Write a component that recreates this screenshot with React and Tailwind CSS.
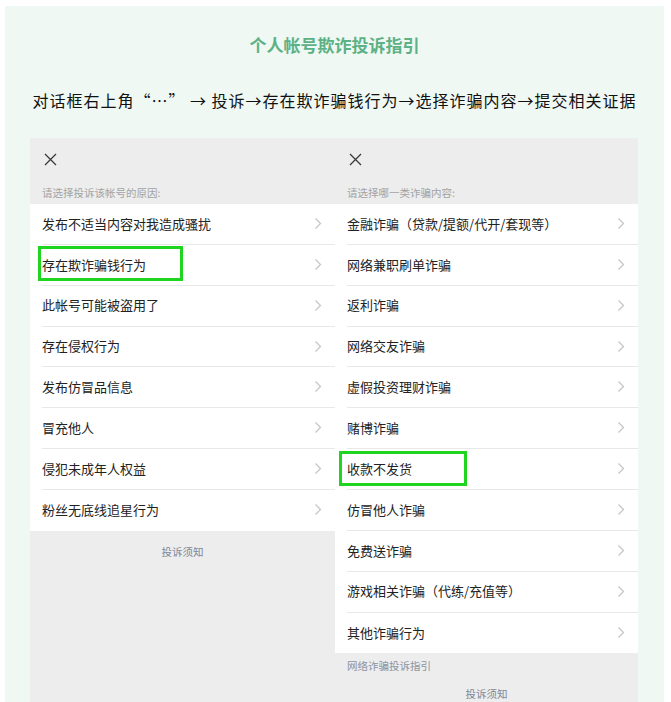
import React from "react";

const leftItems = [
  "发布不适当内容对我造成骚扰",
  "存在欺诈骗钱行为",
  "此帐号可能被盗用了",
  "存在侵权行为",
  "发布仿冒品信息",
  "冒充他人",
  "侵犯未成年人权益",
  "粉丝无底线追星行为",
];

const rightItems = [
  "金融诈骗（贷款/提额/代开/套现等）",
  "网络兼职刷单诈骗",
  "返利诈骗",
  "网络交友诈骗",
  "虚假投资理财诈骗",
  "赌博诈骗",
  "收款不发货",
  "仿冒他人诈骗",
  "免费送诈骗",
  "游戏相关诈骗（代练/充值等）",
  "其他诈骗行为",
];

function Chevron() {
  return (
    <svg width="8" height="13" viewBox="0 0 8 13" className="shrink-0">
      <polyline points="1.5,1.5 6.5,6.5 1.5,11.5" fill="none" stroke="#c4c4c4" strokeWidth="1.2" />
    </svg>
  );
}

function CloseIcon() {
  return (
    <svg width="13" height="13" viewBox="0 0 13 13">
      <path d="M1 1 L12 12 M12 1 L1 12" stroke="#3a3a3a" strokeWidth="1.3" fill="none" />
    </svg>
  );
}

function Row({ text, last }) {
  return (
    <div className="h-[40.86px] pl-[12px] bg-white">
      <div className={`h-full flex items-center justify-between pr-[13px] pb-[1px] ${last ? "" : "border-b border-[#e8e8e8]"}`}>
        <span className="text-[13px] text-[#222]">{text}</span>
        <Chevron />
      </div>
    </div>
  );
}

function PanelHeader({ hint }) {
  return (
    <div className="h-[66px] flex flex-col pl-[14px]">
      <div className="pt-[15px] h-[40px]">
        <CloseIcon />
      </div>
      <div className="text-[10.5px] text-[#a3a3a3] mt-[7px] -ml-[2px]">{hint}</div>
    </div>
  );
}

export default function App() {
  return (
    <div
      className="h-[702px] overflow-hidden bg-white pt-[6px] pl-[5px] pr-[7px]"
      style={{ fontFamily: '"Noto Sans CJK SC", "Noto Sans", sans-serif' }}
    >
      <div className="h-[720px] bg-[#eff8f3] px-[25px]">
        <h1 className="pt-[27px] text-center text-[17px] leading-[24px] font-bold text-[#5cb185]">
          个人帐号欺诈投诉指引
        </h1>
        <p className="mt-[31px] text-[16px] leading-[24px] tracking-[1px] text-[#111] text-center whitespace-nowrap">
          对话框右上角“…” → 投诉→存在欺诈骗钱行为→选择诈骗内容→提交相关证据
        </p>
        <div className="mt-[26px] flex w-[608px]">
          <div className="relative w-[305px] h-[600px] bg-[#ededed]">
            <PanelHeader hint="请选择投诉该帐号的原因:" />
            {leftItems.map((t, i) => (
              <Row key={t} text={t} last={i === leftItems.length - 1} />
            ))}
            <div className="pt-[14px] text-center text-[10.5px] leading-[14px] text-[#7f8699]">投诉须知</div>
            <div className="absolute left-[8px] top-[108px] w-[145px] h-[35px] border-[3px] border-[#1fd51f]" />
          </div>
          <div className="relative w-[303px] h-[600px] bg-[#ededed]">
            <PanelHeader hint="请选择哪一类诈骗内容:" />
            {rightItems.map((t, i) => (
              <Row key={t} text={t} last={i === rightItems.length - 1} />
            ))}
            <div className="pt-[6px] pl-[12px] text-[10.5px] leading-[14px] text-[#8b93a3]">网络诈骗投诉指引</div>
            <div className="pt-[14px] text-center text-[10.5px] leading-[14px] text-[#7f8699]">投诉须知</div>
            <div className="absolute left-[4px] top-[313px] w-[128px] h-[35px] border-[3px] border-[#1fd51f]" />
          </div>
        </div>
      </div>
    </div>
  );
}
